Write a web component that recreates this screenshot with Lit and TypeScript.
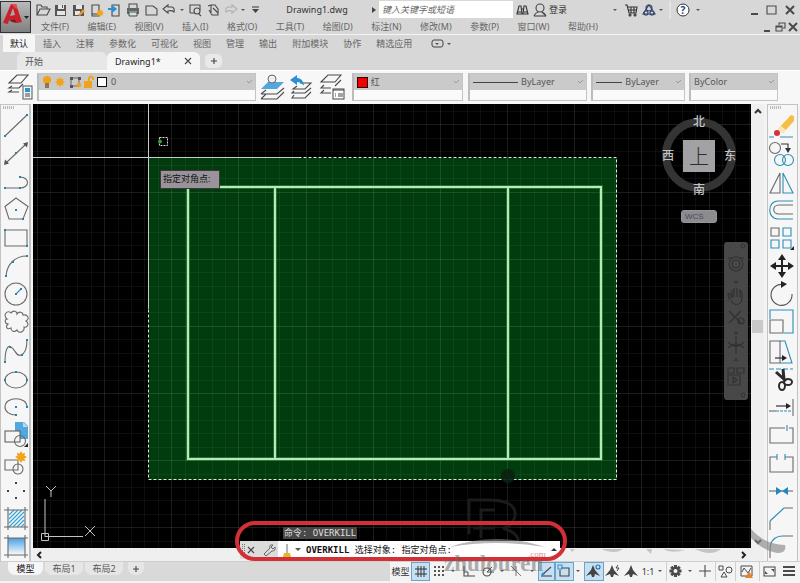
import { LitElement, html, svg, css, TemplateResult, SVGTemplateResult } from "lit";
import { customElement } from "lit/decorators.js";

type Glyph = SVGTemplateResult | SVGTemplateResult[];
interface Tool {
  name: string;
  art: Glyph;
}
interface StatusItem {
  name: string;
  w: number;
  art: Glyph;
  on?: boolean;
  sep?: boolean;
}

const GRAY = "#6a6a6a";
const BLUE = "#2a8fb8";
const INK = "#4a4a4a";

const icon = (w: number, h: number, art: Glyph): TemplateResult =>
  html`<svg width=${w} height=${h} viewBox="0 0 ${w} ${h}" fill="none" aria-hidden="true">${art}</svg>`;

const line = (d: string, c = GRAY, w = 1.1) => svg`<path d=${d} stroke=${c} stroke-width=${w} fill="none"/>`;
const fill = (d: string, c = GRAY) => svg`<path d=${d} fill=${c}/>`;
const dots = (...p: [number, number][]) => p.map(([x, y]) => svg`<rect x=${x - 1} y=${y - 1} width="2" height="2" fill="#2384b0"/>`);
const ring = (x: number, y: number, r: number, c = GRAY, w = 1.1) =>
  svg`<circle cx=${x} cy=${y} r=${r} stroke=${c} stroke-width=${w} fill="none"/>`;
const caret = (x: number, y: number, s = 2) => fill(`M${x - s} ${y - 1}h${2 * s}l${-s} ${s}z`, "#555");

const burst = (x: number, y: number, r: number) => {
  const pts: string[] = [];
  for (let i = 0; i < 16; i++) {
    const a = (i * Math.PI) / 8;
    const k = i % 2 ? r * 0.62 : r;
    pts.push(`${(x + k * Math.cos(a)).toFixed(1)},${(y + k * Math.sin(a)).toFixed(1)}`);
  }
  return svg`<polygon points=${pts.join(" ")} fill="#f2a51c"/>`;
};

const drawTools: Tool[] = [
  { name: "直线", art: [line("M3 24L25 3"), ...dots([3, 24], [25, 3])] },
  { name: "构造线", art: [line("M5 22L23 5"), fill("M2 25l1-5.500l4 4zM26 2l-1 5.500l-4-4z", "#555"), ...dots([14, 13])] },
  { name: "多段线", art: [line("M3 20H18M18 9C28 9 28 20 18 20"), ...dots([3, 20], [18, 20], [18, 9])] },
  { name: "多边形", art: [line("M14 2L26 10.500L21 23H7L3 10.500z"), ...dots([14, 14], [21, 23])] },
  { name: "矩形", art: [line("M3 6H25V22H3z"), ...dots([3, 6], [25, 22])] },
  { name: "圆弧", art: [line("M25 4C13 4 5 12 4 24"), ...dots([25, 4], [11, 10], [4, 24])] },
  { name: "圆", art: [ring(14, 14, 11), line("M14 14L19 9", BLUE), ...dots([14, 14], [19, 9])] },
  {
    name: "修订云线",
    art: line("M5 11C0 7 6 1 9 5C11 2 15 3 15 6C17 3 21 4 21 7C26 6 28 11 24 13C28 16 25 20 22 19C23 24 17 26 15 22C12 25 9 23 9 20C5 22 3 19 6 16C2 15 3 11 5 11z"),
  },
  { name: "样条曲线", art: [line("M3 25C3 15 5 7 9 10C14 13 14 20 19 18C24 16 25 10 25 3"), ...dots([3, 25], [8, 10], [20, 18], [25, 3])] },
  { name: "椭圆", art: [svg`<ellipse cx="14" cy="15" rx="11" ry="8" stroke=${GRAY} stroke-width="1.1"/>`, ...dots([14, 7], [3, 15], [25, 15])] },
  { name: "椭圆弧", art: [line("M25 14C25 3 3 3 3 14C3 19 8 22 14 22"), ...dots([14, 14], [25, 14], [14, 22])] },
  {
    name: "插入块",
    art: [fill("M13 1H22L26 5V18H13z", "#52a7dc"), fill("M21 1v5h5z", "#b6dcf2"), svg`<rect x="3" y="10" width="15" height="11" fill="#f5f5f5" stroke="#555"/>`, ring(18, 20, 5.500), fill("M22 26h4v-4z", "#222")],
  },
  { name: "创建块", art: [line("M3 11H16V21H3z"), ring(16, 20, 5), burst(19, 8, 6)] },
  { name: "点", art: [[14, 6], [6, 14], [22, 14], [14, 21]].map(([x, y]) => svg`<rect x=${x - 1} y=${y - 1} width="2" height="2" fill="#444"/>`) },
  {
    name: "图案填充",
    art: [svg`<rect x="6" y="5" width="17" height="17" fill="#eef6fa"/>`, line("M7 10L12 5M7 14L16 5M7 18L20 5M7 22L22 7M11 22L22 11M15 22L22 15M19 22L22 19", "#3aa0cc", 1.1), line("M6 2V25M23 2V25M2 5H26M2 22H26")],
  },
  {
    name: "渐变色",
    art: [svg`<linearGradient id="sky" x1="0" y1="0" x2="0" y2="1"><stop offset="0" stop-color="#4a9fe0"/><stop offset="1" stop-color="#f2f8fd"/></linearGradient><rect x="6" y="5" width="17" height="16" fill="url(#sky)"/>`, line("M6 2V25M23 2V25M2 5H26M2 22H26")],
  },
];

const editTools: Tool[] = [
  {
    name: "删除",
    art: [fill("M10 17L23 3L26 4V9L15 21z", "#f5bf45"), fill("M10 17l3-3l5 4l-3 3z", "#fbe7b4"), svg`<ellipse cx="9" cy="21" rx="3" ry="3" fill="#dc2f3c"/>`, line("M1 25H6M12 25H25", BLUE)],
  },
  { name: "复制", art: [ring(7, 8, 5.500), line("M13 4H20V9", "#333"), fill("M17 8h6l-3 5z", "#333"), ring(12, 20, 5.500, BLUE), ring(20, 20, 5.500, BLUE)] },
  { name: "镜像", art: [line("M12 5V25H2z"), line("M15 5V25H25z", BLUE)] },
  { name: "偏移", art: [line("M25 5H10C-1 5 -1 23 10 23H25", BLUE), line("M25 9H11C4 9 4 18 11 18H25")] },
  { name: "阵列", art: [line("M3 4H11V12H3z"), line("M15 4H23V12H15zM3 16H11V24H3zM15 16H23V24H15z", BLUE), fill("M22 26h4v-4z", "#222")] },
  { name: "移动", art: [line("M14 5V23M5 14H23", "#222", 2), fill("M14 2l4 6h-8zM14 26l4-6h-8zM2 14l6-4v8zM26 14l-6-4v8z", "#222")] },
  { name: "旋转", art: [line("M15 4.500A10.500 10.500 0 1 0 24 14", "#555"), fill("M13 1l6 3l-6 4z", "#222")] },
  { name: "缩放", art: [line("M2 11V2H25V25H16", BLUE), line("M2 12H15V25H2z")] },
  { name: "拉伸", art: [line("M2 4H12V26H2z"), line("M12 4H17L24 26H12", BLUE), line("M7 21H15", "#222"), fill("M14 18l5 3l-5 3z", "#222")] },
  {
    name: "修剪",
    art: [svg`<path d="M1 4H25" stroke=${BLUE} stroke-dasharray="5 2"/>`, line("M15 4L16 15M8 7L18 16", "#2b2b2b", 3), svg`<ellipse cx="14" cy="21" rx="3" ry="4" stroke="#2b2b2b" stroke-width="2"/><ellipse cx="20" cy="17" rx="4" ry="3" stroke="#2b2b2b" stroke-width="2"/>`],
  },
  { name: "延伸", art: [line("M8 13H20", "#222"), fill("M18 10l5 3l-5 3z", "#222"), line("M25 6V23"), line("M1 18H8"), svg`<path d="M8 18H24" stroke=${BLUE} stroke-dasharray="3 1"/>`] },
  { name: "打断于点", art: [line("M17 7H2V22H25V7H21"), line("M19 4V10", BLUE)] },
  { name: "打断", art: [line("M9 8H2V23H25V8H17"), line("M9 5V11M17 5V11", BLUE)] },
  { name: "合并", art: [line("M1 14H25"), fill("M8 10l6 4l-6 4zM20 10l-6 4l6 4z", "#2186c4")] },
  { name: "倒角", art: [line("M2 25V16M16 3H25"), line("M2 16L16 3", BLUE)] },
  { name: "圆角", art: [line("M2 25V16M15 3H25"), line("M2 16C2 8 7 3 15 3", BLUE)] },
];

const quickTools: Tool[] = [
  { name: "打开", art: [line("M3 14V4H7L8 6H13V8M3 14L6 8H16L13 14z", INK)] },
  { name: "保存", art: [fill("M3 4H14V15H3z", "#555"), fill("M6 4h6v4H6zM5 10h8v4H5z", "#e6e6e6"), fill("M10 4h1v3h-1z", "#555")] },
  { name: "另存为", art: [fill("M3 4H14V15H3z", "#555"), fill("M6 4h6v4H6zM5 10h5v4H5z", "#e6e6e6"), fill("M8 14l5-6l2 2l-5 5z", "#e39b35")] },
  { name: "从 Web 打开", art: [line("M4 4H11V15H4z", INK), line("M4 13H11", INK), burst(12, 12, 4)] },
  { name: "保存到 Web", art: [line("M6 4H13V15H6z", INK), fill("M2 7h4v-3l5 4l-5 4V9H2z", "#2491d0")] },
  { name: "打印", art: [line("M5 7V3H13V7", INK), fill("M3 7h12v6H3z", "#666"), fill("M5 10h8v5H5z", "#cfe3dc"), line("M5 11H13V15H5z", INK, 1)] },
  { name: "新建", art: [line("M4 5H11L15 8V14H4z", INK)] },
  { name: "放弃", art: [line("M3 8L8 4V6H12Q15 7 14 11Q12 9 8 10V12z", INK)] },
];
const quickTools2: Tool[] = [
  { name: "打印预览", art: [line("M4 12V4H14V9M4 12H8", INK), ring(11, 10, 3, INK), line("M13 13L15 15", INK)] },
  { name: "批处理打印", art: [line("M4 5L7 4V13M7 4H11L14 8V14H8L5 9", INK), line("M9 7L14 12", INK)] },
  { name: "重做", art: [line("M15 8L10 4V6H6Q3 7 4 11Q6 9 10 10V12z", "#b0b0b0")] },
];

const menus = ["文件(F)", "编辑(E)", "视图(V)", "插入(I)", "格式(O)", "工具(T)", "绘图(D)", "标注(N)", "修改(M)", "参数(P)", "窗口(W)", "帮助(H)"];
const ribbonTabs = ["默认", "插入", "注释", "参数化", "可视化", "视图", "管理", "输出", "附加模块", "协作", "精选应用"];

const layerArt = [
  line("M2 10L10 2H21L14 10z", INK),
  line("M5 13L2 15H12L16 11M5 17L2 19H12", INK),
  svg`<rect x="16" y="13" width="9" height="13" fill="#eef6fb" stroke="#555"/><rect x="18" y="15" width="5" height="4" fill="#2c93cf"/>`,
  line("M18 21H23M18 23H23", "#444", 1),
];
const layerTools: Tool[] = [
  {
    name: "设为当前",
    art: [line("M2 26L7 21M2 26H18L25 19M2 21L7 17M2 21H18L25 15", INK), fill("M2 16L9 9H25L18 16z", "#52a7dc"), svg`<circle cx="13" cy="6" r="4" fill="#eef0f0" stroke="#666"/>`],
  },
  {
    name: "匹配图层",
    art: [line("M11 10H22L16 16H4L8 13M5 18L3 20H16L22 15M5 22L3 25H16L22 19", INK), fill("M1 7L8 2V5Q14 5 15 13Q12 9 8 9V12z", "#2a8fd4")],
  },
  {
    name: "图层特性",
    art: [line("M2 9L9 2H22L16 9zM5 12L2 15H12M5 17L2 20H12M22 7L16 13", INK), svg`<rect x="14" y="16" width="11" height="10" fill="#fff" stroke="#444"/>`, line("M14 17H25M16 21H17M19 21H24M16 23H17M19 23H24", "#444", 1)],
  },
];

const person = (x: number, y: number) => fill(`M${x} ${y - 6}l2 5l5 6l-5-2l-1 3h-2l-1-3l-5 2l5-6z`, "#444");

const statusItems: StatusItem[] = [
  { name: "栅格", w: 19, on: true, art: line("M7 4V15M10 4V15M13 4V15M4 7H16M4 12H16", "#333", 1) },
  { name: "捕捉", w: 18, art: [4, 8, 12].flatMap((x) => [5, 9, 13].map((y) => svg`<rect x=${x} y=${y - 1} width="2" height="2" fill="#555"/>`)) },
  { name: "捕捉设置", w: 10, art: caret(5, 9) },
  { name: "正交", w: 21, art: [line("M6 4V14H17", INK), line("M6 10H10V14", INK, 1)] },
  { name: "极轴", w: 17, art: [ring(8, 10, 4, INK), line("M8 10H15M8 10L13 5", INK, 1)] },
  { name: "极轴设置", w: 12, art: caret(6, 9) },
  { name: "等轴测", w: 16, art: line("M3 4L13 14M8 4V14", "#777", 1) },
  { name: "等轴测设置", w: 14, art: caret(8, 9) },
  { name: "对象捕捉追踪", w: 17, on: true, art: [line("M3 14H14", INK), line("M4 13L13 5", INK), ring(5, 12, 1, "#2a8fd4")] },
  { name: "二维对象捕捉", w: 19, on: true, art: [line("M6 6H14V14H5V8", "#444"), svg`<rect x="3" y="3" width="4" height="4" stroke="#2a8fd4"/>`] },
  { name: "捕捉选项", w: 10, art: caret(4, 9) },
  { name: "注释可见性", w: 20, on: true, art: [person(9, 9), ring(14, 5, 2, "#2a6f9f")] },
  { name: "自动缩放", w: 18, art: [person(8, 9), line("M14 3L12 6H15L13 9", "#444", 1)] },
  { name: "注释比例", w: 18, art: person(9, 9) },
];
const statusItems2: StatusItem[] = [
  { name: "比例列表", w: 10, art: caret(4, 9) },
  {
    name: "切换工作空间",
    w: 18,
    sep: true,
    art: [0, 45, 90, 135].map((a) => svg`<rect x="8" y="3" width="3" height="12" fill="#4a4a4a" transform="rotate(${a} 9.5 9)"/>`).concat(svg`<circle cx="9.5" cy="9" r="4" fill="#4a4a4a"/><circle cx="9.5" cy="9" r="2" fill="#f3f3f3"/>`),
  },
  { name: "工作空间", w: 12, art: caret(6, 9) },
  { name: "注释监视器", w: 19, art: line("M9 3V15M3 9H15", INK) },
  { name: "隔离对象", w: 20, sep: true, art: [line("M4 4H8V8H4z", INK, 1), ring(14, 8, 3, INK, 1), line("M9 10L12 15H6z", INK, 1)] },
  { name: "图形性能", w: 24, sep: true, art: [line("M6 4H17V14H6z", INK, 1), line("M7 10L9 6L13 11L16 6", INK, 1), fill("M14 9l4 7h-8z", "#e5832e")] },
  { name: "全屏显示", w: 22, sep: true, art: [line("M5 5H16V14H5z", INK), fill("M12 7h3v3zM6 12h3l-3-3z", INK)] },
  { name: "自定义", w: 16, art: line("M2 5H14M2 9H14M2 13H14", INK, 2) },
];

@customElement("cad-canvas")
export class CadCanvas extends LitElement {
  static styles = css`
    :host { display: block; position: relative; flex: 1; min-height: 0; overflow: hidden; background: #000; }
    .sheet { position: absolute; inset: 0; width: 100%; height: 100%; display: block; }
    .prompt { position: absolute; left: 127px; top: 66px; height: 19px; width: 60px; box-sizing: border-box; padding-left: 2px; border: 1px solid #3c383d; background: #999499; color: #111; font-size: 9px; line-height: 16px; white-space: nowrap; }
    .cube { position: absolute; right: 13px; top: 10px; width: 78px; height: 84px; display: grid; grid-template: 16px 1fr 16px / 16px 1fr 16px; place-items: center; color: #c4c4c4; font-size: 12px; font-weight: 500; line-height: 16px; }
    .cube .disc { position: absolute; left: 1px; top: 3px; }
    .cube span, .cube button { position: relative; }
    .north { grid-area: 1 / 2; }
    .west { grid-area: 2 / 1; }
    .face { grid-area: 2 / 2; width: 32px; height: 32px; padding: 0; border: 0; background: #a2a2a5; color: #2c2c30; font: 300 20px/32px "Noto Sans CJK SC", sans-serif; }
    .east { grid-area: 2 / 3; }
    .south { grid-area: 3 / 2; }
    .wcs { position: absolute; right: 34px; top: 106px; width: 36px; height: 13px; padding: 0 3px; border: 1px solid #97979b; border-radius: 3px; background: #8b8b90; color: #4b4b50; text-align: left; font: 8px/10px "Liberation Sans", sans-serif; }
    .nav { position: absolute; right: 3px; top: 138px; border-radius: 3px; background: #484848; height: 158px; }
    .nav button { display: block; border: 0; padding: 0; background: none; height: 158px; }
  `;

  private grid() {
    const step = 13.43;
    const out: SVGTemplateResult[] = [];
    for (let i = 0; i < 160; i++) {
      const x = Math.round(4 + i * step);
      out.push(svg`<rect x=${x} y="0" width="1" height="100%" fill="#fff" opacity=${i % 5 === 0 ? 0.11 : 0.05}/>`);
    }
    for (let i = 0; i < 100; i++) {
      const y = Math.round(7 + i * step);
      out.push(svg`<rect x="0" y=${y} width="100%" height="1" fill="#fff" opacity=${i % 5 === 1 ? 0.11 : 0.05}/>`);
    }
    return out;
  }

  render() {
    return html`
      <svg class="sheet" fill="none" role="img" aria-label="Drawing1">
        <rect x="116" y="54" width="468" height="322" fill="#003c0d" />
        ${this.grid()}
        <g stroke="#3f8b4c" stroke-width="4" opacity="0.6">
          <rect x="155" y="83" width="413" height="272" />
          <path d="M242 83V355M475 83V355" />
        </g>
        <g stroke="#b4ecb9" stroke-width="2">
          <rect x="155" y="83" width="413" height="272" />
          <path d="M242 83V355M475 83V355" />
        </g>
        <rect x="115.500" y="53.500" width="468" height="322" stroke="#d8ead9" stroke-dasharray="3 2" />
        <path d="M115.500 0V205M0 53.500H266" stroke="#c9c9c9" />
        <rect x="126.500" y="33.500" width="8" height="8" stroke="#d8d8d8" stroke-dasharray="2 1" />
        <circle cx="127" cy="37.500" r="2" fill="#2fa03b" />
        <g stroke="#c4c4c4">
          <path d="M8.500 429.500h7v7h-7zM12 395V433M12 432.500H50" />
          <path d="M13 382l5 5l5-5M18 387v6M52 422l10 10M62 422l-10 10" />
        </g>
        <g stroke="#1e1e1e" opacity="0.9">
          <path d="M436 430V396H455Q484 396 482 412Q480 422 470 424Q490 430 484 444M448 434V406H462M462 424H440" stroke-width="3" />
          <circle cx="475" cy="372" r="7" fill="#0b2110" stroke="none" />
        </g>
      </svg>
      <div class="prompt">指定对角点:</div>
      <div class="cube">
        <svg class="disc" width="76" height="76" viewBox="0 0 76 76" fill="none"><circle cx="38" cy="38" r="33" stroke="#343434" stroke-width="8" /></svg>
        <span class="north">北</span><span class="west">西</span>
        <button class="face">上</button>
        <span class="east">东</span><span class="south">南</span>
      </div>
      <button class="wcs">WCS</button>
      <div class="nav">
        <button aria-label="导航栏">
          ${icon(24, 158, [
            ring(19, 4, 2, "#333", 1), ring(12, 22, 7, "#303030"), ring(12, 22, 4, "#303030"), line("M4 16H8M16 16H20M10 39l2 2l2-2", "#303030"),
            line("M6 58Q2 50 6 52L8 56V48M10 55V46M13 55V46M16 56V48Q20 52 17 60Q12 66 7 59", "#303030"),
            line("M5 69L17 81M17 69L5 81", "#303030"), ring(17, 79, 3, "#303030"), line("M10 90l2 2l2-2", "#303030"),
            line("M4 100Q12 108 20 100M4 106Q12 98 20 106M12 94V112M10 119l2-2l2 2", "#303030"),
            line("M4 126H10V131H4zM13 126H20V131H13zM4 133H16V143H4zM9 135l4 3l-4 3z", "#303030"), ring(19, 153, 2, "#333", 1),
          ])}
        </button>
      </div>
    `;
  }
}

@customElement("app-root")
export class AppRoot extends LitElement {
  static styles = css`
    :host { display: flex; flex-direction: column; height: 100vh; min-width: 800px; overflow: hidden; background: #f4f4f4; color: #555; font: 9px/16px "Noto Sans", "Noto Sans CJK SC", sans-serif; }
    * { box-sizing: border-box; }
    button { margin: 0; padding: 0; border: 0; background: none; color: inherit; font: inherit; display: flex; align-items: center; justify-content: center; flex: none; }
    svg { display: block; flex: none; }
    header { background: #d7d7d7; flex: none; }
    .top { display: grid; grid-template-columns: 31px 1fr; }
    .logo { height: 32px; margin-top: 1px; border: 1px solid #333; background: linear-gradient(#b9b9b9, #808080); }
    .bars { min-width: 0; }
    .title-bar { display: flex; align-items: center; height: 19px; padding-left: 3px; }
    .title-bar h1 { width: 108px; margin: 0; font-size: 9px; font-weight: 400; line-height: 18px; text-align: center; color: #333; }
    .search { width: 134px; height: 17px; border: 0; border-radius: 0; padding: 0 3px; background: #fff; font: italic 9px/16px "Noto Sans", "Noto Sans CJK SC", sans-serif; color: #444; outline: 0; }
    .search::placeholder { color: #666; opacity: 1; }
    .login { gap: 1px; color: #333; }
    .window { display: flex; align-items: center; margin-left: auto; }
    .menu-bar { display: flex; align-items: center; height: 15px; padding-left: 10px; }
    .menus { display: flex; justify-content: space-between; width: 557px; color: #666; }
    .menus button { line-height: 15px; }
    .ribbon { display: flex; align-items: center; height: 18px; border-top: 1px solid #f4f4f4; padding-left: 3px; gap: 1px; }
    .ribbon .tab { height: 17px; padding: 0 7px; color: #666; }
    .ribbon .tab.on { background: #f6f6f6; color: #222; }
    .ribbon .more { margin-left: 11px; }
    .files { display: flex; height: 18px; padding-left: 17px; align-items: stretch; }
    .files .file { border-radius: 6px 6px 0 0; background: #e7e7e7; padding: 0 8px; display: flex; align-items: center; justify-content: space-between; line-height: 17px; }
    .files .start { width: 90px; }
    .files .open { width: 93px; background: #f6f6f6; color: #222; padding: 0 6px 0 8px; }
    .files .add { width: 17px; margin: 2px 0 2px 5px; border-radius: 5px; background: #e9e9e9; }
    .props { flex: none; height: 34px; padding-top: 2px; display: flex; align-items: flex-start; background: #f7f7f7; border-top: 1px solid #fff; }
    .box { height: 28px; border: 1px solid #c4c4c4; border-left: 2px solid #bcbcbc; background: #fafafa; min-width: 0; }
    .field { display: flex; align-items: center; height: 16px; background: #cacaca; padding-left: 3px; gap: 3px; color: #555; }
    .field select { flex: 1; min-width: 0; height: 16px; border: 0; padding: 0; appearance: none; background: none; color: inherit; font: inherit; outline: 0; }
    .layers { flex: 221; margin-left: 3px; }
    .colors { flex: 111; margin-left: 6px; }
    .types { flex: 119; margin-left: 5px; }
    .weights { flex: 93; margin-left: 4px; }
    .plots { flex: 88; margin-left: 4px; margin-right: 22px; }
    .layer-icon { margin-left: 7px; }
    .layer-tools { display: flex; gap: 3px; margin-left: 3px; }
    main { flex: 1; min-height: 0; display: flex; background: #f3f3f3; }
    .tools { flex: none; width: 31px; display: flex; flex-direction: column; padding: 7px 0 0 1px; background: #f6f6f6; border: 1px solid #c3c3c3; border-width: 1px 2px 0 1px; position: relative; overflow: hidden; }
    .tools::before { content: ""; position: absolute; left: 2px; top: 1px; width: 11px; height: 3px; background: repeating-linear-gradient(90deg, #bbb 0 1px, #eee 1px 2px); }
    .tools button { flex: 1; min-height: 0; width: 28px; }
    .edit { margin: 0 2px 0 3px; padding-left: 0; border-right-width: 1px; }
    .work { flex: 1; min-width: 0; margin-left: 2px; display: flex; flex-direction: column; position: relative; }
    .hbar { flex: none; height: 13px; display: flex; align-items: center; justify-content: space-between; padding: 0 2px; background: #efefef; }
    .vbar { flex: none; width: 13px; padding-bottom: 13px; display: flex; flex-direction: column; justify-content: space-between; align-items: center; background: #efefef; }
    .thumb { width: 11px; height: 13px; background: #c9c9c9; }
    .history { position: absolute; left: 250px; bottom: 22px; height: 12px; padding: 0 1px; background: #474747; color: #ddd; font: 9px/12px "DejaVu Sans Mono", "Noto Sans CJK SC", monospace; white-space: pre; }
    .command { position: absolute; left: 207px; bottom: 2px; width: 320px; height: 18px; display: flex; align-items: center; background: #fff; color: #111; font: 9px/18px "DejaVu Sans Mono", "Noto Sans CJK SC", monospace; white-space: pre; }
    .handle { display: flex; height: 18px; width: 38px; background: #dcdcdc; }
    .command label { display: flex; }
    .command b { font-weight: 700; }
    .command input { flex: 1; min-width: 0; border: 0; padding: 0; background: none; font: inherit; outline: 0; }
    .ring { position: absolute; left: 202px; bottom: 0; width: 332px; height: 40px; border: 4px solid #d22f37; border-radius: 20px; pointer-events: none; }
    .mark { position: absolute; left: 400px; bottom: -20px; pointer-events: none; z-index: 2; overflow: visible; font-family: "Liberation Serif", serif; }
    footer { flex: none; height: 22px; display: flex; align-items: flex-start; background: #d9d9d9; border-top: 1px solid #cfcfcf; border-bottom: 2px solid #f5f5f5; }
    .layouts { display: flex; padding-left: 8px; }
    .layouts button { height: 13px; background: #e6e6e6; border-radius: 0 0 7px 7px; width: 38px; margin-right: 2px; }
    .layouts .on { background: #f6f6f6; color: #111; width: 35px; }
    .layouts .plus { width: 16px; margin-left: 3px; }
    .status { display: flex; height: 19px; margin-left: auto; padding-right: 3px; background: #f3f3f3; }
    .status button { height: 19px; color: #333; }
    .status .space { width: 21px; }
    .status .scale { width: 16px; }
    .status .on { background: #c6e0f3; box-shadow: inset 0 0 0 1px #6fa3c6; }
    .status .sep { box-shadow: inset 1px 0 #cfcfcf; }
  `;

  private tool(t: Tool, w = 28, h = 28) {
    return html`<button aria-label=${t.name}>${icon(w, h, t.art)}</button>`;
  }

  private status(s: StatusItem) {
    return html`<button class="${s.on ? "on" : ""} ${s.sep ? "sep" : ""}" aria-label=${s.name}>${icon(s.w, 19, s.art)}</button>`;
  }

  private field(cls: string, name: string, value: string, lead: unknown) {
    return html`<div class="box ${cls}">
      <div class="field">
        ${lead}<select aria-label=${name}><option>${value}</option></select>
        ${icon(10, 16, line("M2 7l2 2l3-3", "#999", 1))}
      </div>
    </div>`;
  }

  render() {
    return html`
      <header>
        <div class="top">
          <button class="logo" aria-label="应用程序菜单">
            ${icon(29, 30, [
              fill("M2 21L10 2L15 2L21 20L16 21L14 17L8 18L7 22z", "#c9202c"),
              fill("M9 14L12 6L14 13z", "#a9a9a9"), fill("M10 2L15 2L17 8L13 5z", "#e5484f"), fill("M8 18L14 17L16 21L11 20z", "#8f131c"),
              fill("M23 14h5l-2.500 3z", "#222"),
            ])}
          </button>
          <div class="bars">
            <div class="title-bar">
              ${quickTools.map((t) => this.tool(t, 18, 18))}
              <button aria-label="放弃列表">${icon(8, 18, caret(4, 9))}</button>
              ${quickTools2.map((t) => this.tool(t, 18, 18))}
              <button aria-label="重做列表">${icon(7, 18, caret(3, 9))}</button>
              <button aria-label="自定义快速访问">${icon(16, 18, [line("M5 6H12", "#444"), fill("M5 8h7l-3.500 4z", "#444")])}</button>
              <h1>Drawing1.dwg</h1>
              ${icon(8, 18, fill("M1 6l4 3l-4 3z", "#444"))}
              <input class="search" aria-label="搜索" placeholder="键入关键字或短语" />
              <button aria-label="查找">${icon(19, 18, [line("M4 13L6 5H8L9 13zM10 13L11 5H13L15 13zM8 8H11", "#333"), line("M4 11H8M11 11H15", "#333", 1)])}</button>
              <button class="login">${icon(16, 18, [ring(8, 7, 4, "#444"), line("M2 15Q3 12 6 11M10 11Q13 12 14 15z", "#444"), line("M2 15H14", "#444")])}<span>登录</span></button>
              <div class="window">
                <button aria-label="登录选项">${icon(12, 18, caret(6, 9))}</button>
                <button aria-label="购物车">${icon(20, 18, [line("M4 4H6L8 12H15L16 6H7M7 9H16M10 6V12M13 6V12", "#333"), ring(9, 14, 1, "#333"), ring(14, 14, 1, "#333")])}</button>
                <button aria-label="Autodesk App">${icon(16, 18, [line("M8 4L14 13H2z", "#34406c"), ring(8, 7, 3, "#34406c"), ring(5, 12, 2, "#34406c"), ring(11, 12, 2, "#34406c")])}</button>
                <button aria-label="应用选项">${icon(12, 18, caret(4, 9))}</button>
                <button aria-label="帮助">
                  <svg width="22" height="18" viewBox="0 0 22 18" fill="none"><path d="M1 0V18" stroke="#eee" /><circle cx="14" cy="9" r="6" stroke="#333" fill="#fff" /><text x="14" y="13" font-size="10" font-weight="700" text-anchor="middle" fill="#1e4b86">?</text></svg>
                </button>
                <button aria-label="帮助选项">${icon(12, 18, caret(7, 9))}</button>
                <button aria-label="最小化">${icon(58, 18, line("M48 13H55", INK, 2))}</button>
                <button aria-label="最大化">${icon(20, 18, line("M6 5H15V13H6z", INK))}</button>
                <button aria-label="关闭">${icon(19, 18, line("M5 5L13 13M13 5L5 13", INK, 2))}</button>
              </div>
            </div>
            <div class="menu-bar">
              <nav class="menus">${menus.map((m) => html`<button>${m}</button>`)}</nav>
              <div class="window">
                <button aria-label="最小化图形">${icon(12, 14, line("M2 11H8", INK, 2))}</button>
                <button aria-label="还原图形">${icon(13, 14, line("M5 5V3H11V8H9M2 6H8V11H2zM2 7H8", INK))}</button>
                <button aria-label="关闭图形">${icon(13, 14, line("M2 3L10 11M10 3L2 11", INK, 2))}</button>
              </div>
            </div>
          </div>
        </div>
        <nav class="ribbon">
          ${ribbonTabs.map((t, i) => html`<button class="tab ${i === 0 ? "on" : ""}">${t}</button>`)}
          <button class="more" aria-label="功能区显示">${icon(22, 16, [svg`<rect x="1" y="4" width="11" height="7" rx="2" stroke="#444"/>`, caret(6, 8), caret(18, 8)])}</button>
        </nav>
        <div class="files">
          <div class="file start"><button>开始</button></div>
          <div class="file open">
            <button>Drawing1*</button>
            <button aria-label="关闭文件">${icon(12, 12, line("M3 3L9 9M9 3L3 9", "#444"))}</button>
          </div>
          <button class="add" aria-label="新图形">${icon(12, 12, line("M6 3V9M3 6H9", "#444"))}</button>
        </div>
      </header>

      <section class="props">
        <button class="layer-icon" aria-label="图层">${icon(27, 28, layerArt)}</button>
        ${this.field("layers", "图层", "0", icon(66, 16, [
          svg`<circle cx="5" cy="6" r="4" fill="#f0a21c"/>`, fill("M3 9h4v5H3z", "#8a7a50"), burst(18, 8, 5),
          line("M29 4H37V12H29z", "#666", 1), fill("M28 3h3v3h-3zM36 3h3v3h-3zM28 11h3v3h-3z", "#555"), burst(37, 11, 3),
          fill("M42 7h8v7h-8z", "#f0a21c"), line("M47 7V4Q49 1 51 4V6", "#f0a21c", 2), svg`<rect x="55.500" y="3.500" width="9" height="9" fill="#fff" stroke="#111"/>`,
        ]))}
        <div class="layer-tools">${layerTools.map((t) => this.tool(t, 27, 28))}</div>
        ${this.field("colors", "颜色", "红", icon(11, 16, svg`<rect x="0.500" y="3.500" width="10" height="10" fill="#f00000" stroke="#300"/>`))}
        ${this.field("types", "线型", "ByLayer", icon(45, 16, line("M0 8.500H45", "#444", 1)))}
        ${this.field("weights", "线宽", "ByLayer", icon(26, 16, line("M0 8.500H26", "#444", 1)))}
        ${this.field("plots", "打印样式", "ByColor", "")}
      </section>

      <main>
        <div class="tools">${drawTools.map((t) => this.tool(t))}</div>
        <div class="work">
          <cad-canvas></cad-canvas>
          <div class="hbar">
            <button aria-label="向左">${icon(10, 12, line("M6 3L3 6L6 9", "#222", 2))}</button>
            <button aria-label="向右">${icon(10, 12, line("M3 3L6 6L3 9", "#222", 2))}</button>
          </div>
          <div class="history">命令: OVERKILL</div>
          <div class="command">
            <div class="handle">
              <button aria-label="关闭命令行">${icon(18, 18, [svg`<path d="M2.500 3V14M4.500 3V14" stroke="#777" stroke-dasharray="1 1"/>`, line("M8 6L14 12M14 6L8 12", "#444")])}</button>
              <button aria-label="自定义命令行">${icon(20, 18, line("M6 13L12 7Q11 3 15 4L13 6L15 8L17 6Q18 10 14 10L8 15z", "#666", 1))}</button>
            </div>
            <button aria-label="最近命令">${icon(28, 18, [line("M9 3V12", "#777"), fill("M6 12h6l1 4H5z", "#e9b321"), fill("M17 7h6l-3 3z", "#555")])}</button>
            <label for="cmd"><b>OVERKILL</b> 选择对象: 指定对角点:</label>
            <input id="cmd" />
            <button aria-label="展开历史">${icon(14, 18, fill("M5 10h6l-3-3z", "#333"))}</button>
          </div>
          <div class="ring"></div>
          <svg class="mark" width="360" height="80" viewBox="0 0 360 80" fill="none">
            <path d="M17 46Q62 30 112 46Q62 38 17 46z" fill="#888" opacity="0.6" />
            <path d="M137 48h5l-3 3zM168 48q14 6 22 0zM213 48h6l-1 5zM230 48q8 5 22 1zM262 48q16 8 26 0z" fill="#999" opacity="0.5" />
            <path d="M318 28Q332 44 352 44Q354 52 344 52Q330 50 318 37z" fill="#888" opacity="0.65" />
            <text x="11" y="70" font-size="23" font-weight="700" fill="#666" opacity="0.5">zhulouren</text>
            <text x="95" y="56" font-size="9" fill="#d8575c" opacity="0.7">.com</text>
          </svg>
        </div>
        <div class="vbar">
          <button aria-label="向上">${icon(13, 14, line("M4 9L7 6L10 9", "#333", 2))}</button>
          <div class="thumb"></div>
          <button aria-label="向下">${icon(13, 14, line("M4 6L7 9L10 6", "#333", 2))}</button>
        </div>
        <div class="tools edit">${editTools.map((t) => this.tool(t))}</div>
      </main>

      <footer>
        <nav class="layouts">
          <button class="on">模型</button><button>布局1</button><button>布局2</button>
          <button class="plus" aria-label="新建布局">${icon(12, 12, line("M6 3V9M3 6H9", "#444"))}</button>
        </nav>
        <div class="status">
          <button class="space">模型</button>
          ${statusItems.map((s) => this.status(s))}
          <button class="scale">1:1</button>
          ${statusItems2.map((s) => this.status(s))}
        </div>
      </footer>
    `;
  }
}
